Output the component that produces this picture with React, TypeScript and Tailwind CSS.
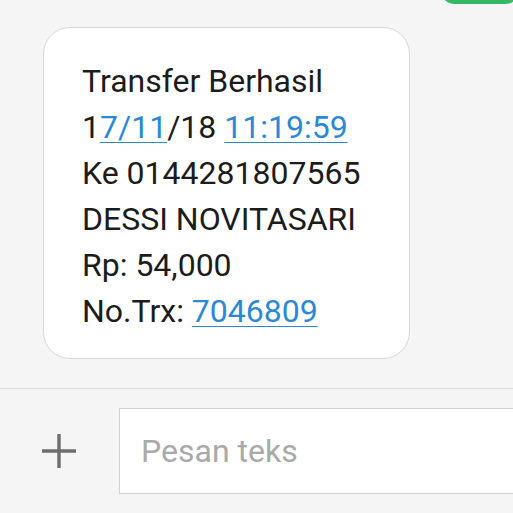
import React from "react";

export default function App() {
  const link = "text-[#2b88d6] underline decoration-1 underline-offset-[4px]";
  return (
    <div className="w-[513px] h-[513px] overflow-hidden bg-[#f4f5f4] flex flex-col font-['Roboto',sans-serif]">
      <div className="flex justify-end">
        <div className="w-[80px] h-[30px] mt-[-26px] mr-[-7px] rounded-[26px] bg-[#34b868]" />
      </div>
      <div className="flex-1 pt-[23px] pl-[43px]">
        <div className="w-[367px] h-[332px] bg-white border border-[#d6d8d6] rounded-[27px] pl-[38px] pt-[30px] text-[32px] leading-[46px] text-[#1c1c1c]">
          <div>Transfer Berhasil</div>
          <div>
            1<span className={link}>7/11</span>/18 <span className={link}>11:19:59</span>
          </div>
          <div>Ke 0144281807565</div>
          <div>DESSI NOVITASARI</div>
          <div>Rp: 54,000</div>
          <div>
            No.Trx: <span className={link}>7046809</span>
          </div>
        </div>
      </div>
      <div className="h-[125px] border-t border-[#dcdedc] flex items-start pt-[19px]">
        <div className="w-[119px] h-[86px] flex items-center justify-center pr-[1px]">
          <svg width="34" height="34" viewBox="0 0 34 34">
            <path d="M17 0V34M0 17H34" stroke="#6e6e6e" strokeWidth="3.4" />
          </svg>
        </div>
        <div className="flex-1 h-[86px] mr-[-10px] bg-white border border-[#cfd1cf] flex items-center pl-[21px] text-[32px] text-[#a9a9a9]">
          Pesan teks
        </div>
      </div>
    </div>
  );
}
